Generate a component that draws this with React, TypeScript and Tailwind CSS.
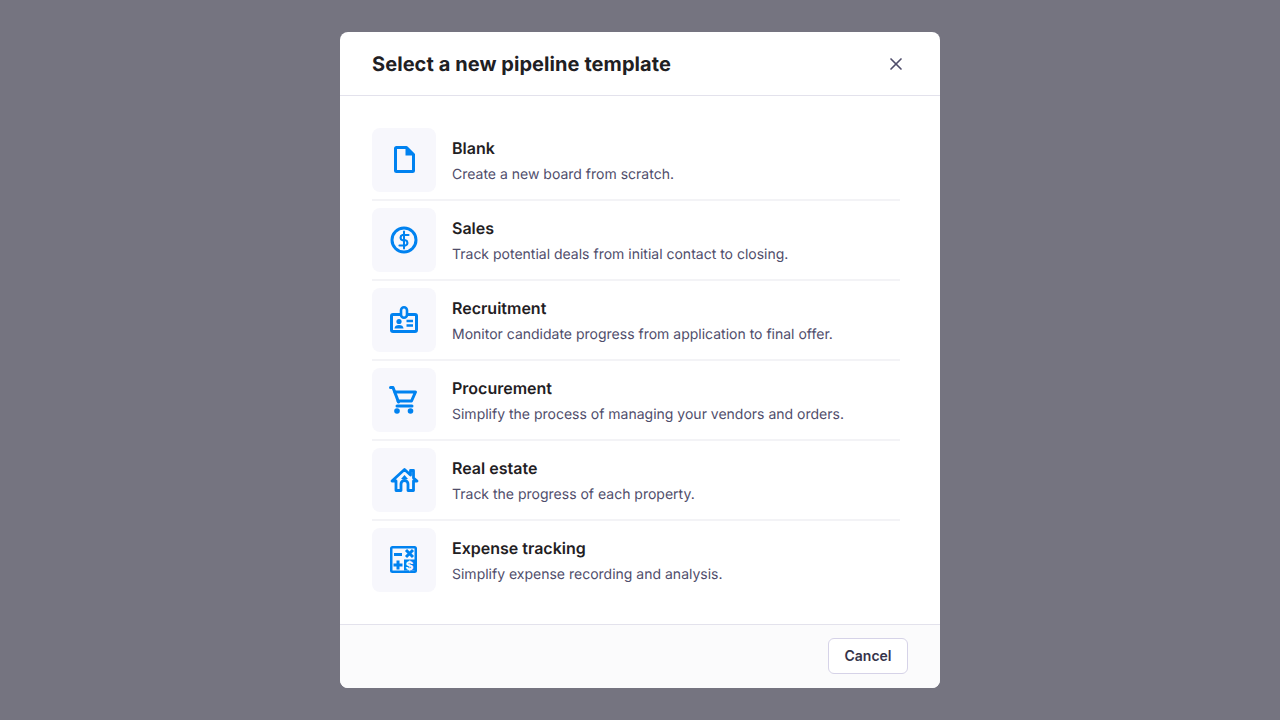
import React from "react";
import { X } from "lucide-react";

const blue = "#0082f0";
const tile = "#f7f7fc";

const FileIcon = () => (
  <svg width="32" height="32" viewBox="0 0 32 32" fill="none">
    <path
      d="M8.5 3.5H18.5L25.5 10.5V26.5A1 1 0 0 1 24.5 27.5H8.5A1 1 0 0 1 7.5 26.5V4.5A1 1 0 0 1 8.5 3.5Z"
      stroke={blue}
      strokeWidth="3"
      strokeLinejoin="round"
    />
    <path d="M17.5 3.5L25.5 11.5H17.5Z" fill={blue} />
  </svg>
);

const DollarIcon = () => (
  <svg width="32" height="32" viewBox="0 0 32 32" fill="none" stroke={blue} strokeLinecap="round">
    <circle cx="16" cy="16" r="12" strokeWidth="3" />
    <path d="M16 7.5V24.5" strokeWidth="2" />
    <path d="M20.5 11H14.5A2.75 2.75 0 0 0 14.5 16.25H17.5A2.75 2.75 0 0 1 17.5 21.5H11.5" strokeWidth="2.2" />
  </svg>
);

const BadgeIcon = () => (
  <svg width="32" height="32" viewBox="0 0 32 32" fill="none">
    <rect x="3.5" y="10.5" width="25" height="17" rx="1.5" stroke={blue} strokeWidth="3" />
    <rect x="13" y="3.25" width="6" height="10.5" rx="3" fill={tile} stroke={blue} strokeWidth="2.6" />
    <circle cx="11" cy="17.5" r="2.6" fill={blue} />
    <path d="M6.5 24.5C6.5 22 8.5 21 11 21S15.5 22 15.5 24.5Z" fill={blue} />
    <path d="M18.5 17H25M18.5 21.5H25" stroke={blue} strokeWidth="2.4" />
  </svg>
);

const CartIcon = () => (
  <svg width="32" height="32" viewBox="0 0 32 32" fill="none" stroke={blue} strokeLinecap="round" strokeLinejoin="round">
    <path d="M2.5 3.5H5L10.5 18" strokeWidth="3" />
    <path d="M7 8H27.5L23.5 17H10" strokeWidth="3" />
    <path d="M9 22H24" strokeWidth="3" />
    <circle cx="9" cy="27" r="2.8" fill={blue} stroke="none" />
    <circle cx="22.5" cy="27" r="2.8" fill={blue} stroke="none" />
  </svg>
);

const HouseIcon = () => (
  <svg width="32" height="32" viewBox="0 0 32 32" fill="none">
    <path
      d="M4 17L16.5 5.5L22.5 11V6.5H25.5V14L29 17H25.5V26.5H20V20A3.5 3.5 0 0 0 13 20V26.5H8V17Z"
      stroke={blue}
      strokeWidth="2.8"
      strokeLinejoin="round"
    />
    <path d="M13 15H20L16.5 11Z" fill={blue} />
  </svg>
);

const CalcIcon = () => (
  <svg width="32" height="32" viewBox="0 0 32 32" fill="none">
    <rect x="2" y="2" width="27" height="27" rx="2.5" fill={blue} />
    <rect x="4.5" y="4.5" width="22" height="22" fill={tile} />
    <rect x="16" y="15.5" width="11" height="11" fill={blue} />
    <path d="M6 10.5H14M18 6L25 13M25 6L18 13M5.5 21H14.5M10 16.5V25.5" stroke={blue} strokeWidth="3" />
    <text x="21.5" y="25.5" textAnchor="middle" fontSize="12" fontWeight="800" fill={tile} fontFamily="Inter, sans-serif">
      $
    </text>
  </svg>
);

const templates = [
  { name: "Blank", desc: "Create a new board from scratch.", icon: <FileIcon /> },
  { name: "Sales", desc: "Track potential deals from initial contact to closing.", icon: <DollarIcon /> },
  { name: "Recruitment", desc: "Monitor candidate progress from application to final offer.", icon: <BadgeIcon /> },
  { name: "Procurement", desc: "Simplify the process of managing your vendors and orders.", icon: <CartIcon /> },
  { name: "Real estate", desc: "Track the progress of each property.", icon: <HouseIcon /> },
  { name: "Expense tracking", desc: "Simplify expense recording and analysis.", icon: <CalcIcon /> },
];

const App = () => {
  return (
    <div className="w-[1280px] h-[720px] bg-[#757480] flex items-center justify-center font-['Inter',sans-serif] antialiased [text-rendering:geometricPrecision]">
      <div className="w-[600px] h-[656px] bg-white rounded-lg flex flex-col overflow-hidden">
        <div className="h-16 shrink-0 flex items-center justify-between pl-8 pr-[34px] border-b border-[#e3e2ec]">
          <h2 className="text-xl font-bold tracking-[0.07px] text-[#1f2023]">Select a new pipeline template</h2>
          <X size={20} color="#4f4d6b" />
        </div>
        <div className="flex-1 pt-8 pl-8 flex flex-col">
          {templates.map((t, i) => (
            <div key={t.name} className="w-[528px] h-20 shrink-0 flex flex-col">
              <div className="flex gap-4 h-[71px]">
                <div className="w-16 h-16 shrink-0 rounded-lg bg-[#f7f7fc] flex items-center justify-center">
                  {t.icon}
                </div>
                <div className="flex flex-col pt-2">
                  <div className="text-base leading-[24px] font-semibold text-[#1f2023]">{t.name}</div>
                  <div className="text-sm leading-[20px] mt-[5px] text-[#4f4d6b]">{t.desc}</div>
                </div>
              </div>
              {i < templates.length - 1 && <div className="h-0.5 bg-[#f3f3f6]" />}
            </div>
          ))}
        </div>
        <div className="h-16 shrink-0 flex justify-end pt-[13px] pr-8 bg-[#fbfbfc] border-t border-[#e3e2ec]">
          <button className="w-20 h-9 rounded-md bg-white border border-[#d6d3e8] text-sm font-semibold text-[#35344a]">
            Cancel
          </button>
        </div>
      </div>
    </div>
  );
};

export default App;
